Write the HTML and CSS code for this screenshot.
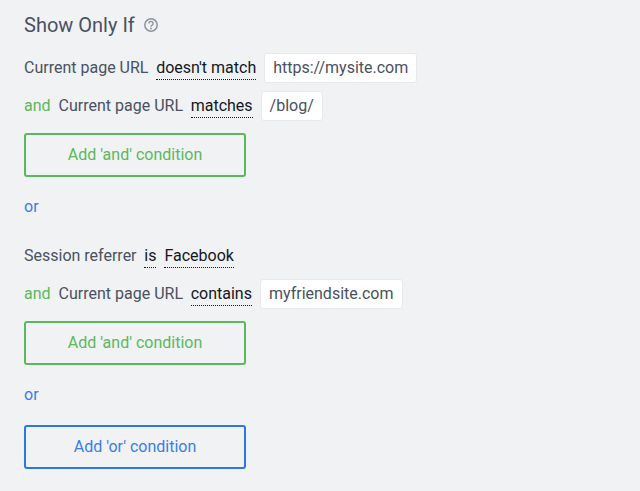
FILE: index.html
```html
<!DOCTYPE html>
<html lang="en">
<head>
    <meta charset="UTF-8">
    <title>Show Only If</title>
    <link rel="stylesheet" href="styles.css">
</head>
<body>
    <div class="title-row">
        <h2>Show Only If</h2>
        <svg class="help-icon" width="16" height="16" viewBox="0 0 16 16" fill="none">
            <circle cx="8" cy="8" r="6.2" stroke="#90949c" stroke-width="1.5"/>
            <path d="M5.9 6.5a2.1 2.1 0 1 1 3.3 1.7c-.8.5-1.2.9-1.2 1.6" stroke="#90949c" stroke-width="1.4"/>
            <rect x="7.2" y="10.7" width="1.6" height="1.6" fill="#90949c"/>
        </svg>
    </div>

    <div class="row">
        <span class="label">Current page URL</span>
        <span class="picker">doesn't match</span>
        <span class="value">https://mysite.com</span>
    </div>
    <div class="row">
        <span class="and">and</span>
        <span class="label">Current page URL</span>
        <span class="picker">matches</span>
        <span class="value">/blog/</span>
    </div>
    <button class="add-btn add-and">Add 'and' condition</button>

    <div class="or">or</div>

    <div class="row">
        <span class="label">Session referrer</span>
        <span class="picker">is</span>
        <span class="picker">Facebook</span>
    </div>
    <div class="row">
        <span class="and">and</span>
        <span class="label">Current page URL</span>
        <span class="picker">contains</span>
        <span class="value">myfriendsite.com</span>
    </div>
    <button class="add-btn add-and">Add 'and' condition</button>

    <div class="or or-last">or</div>

    <button class="add-btn add-or">Add 'or' condition</button>
</body>
</html>
```

FILE: styles.css
```css
body {
    margin: 0;
    padding: 13px 24px 0;
    background-color: #f0f2f4;
    font-family: Roboto, sans-serif;
    font-size: 16px;
    color: #4a5160;
}
.title-row {
    display: flex;
    align-items: center;
    gap: 8px;
    height: 24px;
    margin-bottom: 16px;
}
h2 {
    margin: 0;
    font-size: 20px;
    font-weight: 400;
    line-height: 24px;
}
.help-icon {
    display: block;
}
.row {
    display: flex;
    align-items: center;
    height: 30px;
    margin-bottom: 8px;
}
.and {
    color: #5cb85c;
    margin-right: 8px;
    margin-bottom: 2px;
}
.label {
    margin-right: 7.7px;
    margin-bottom: 2px;
}
.picker {
    color: #14171f;
    line-height: 22px;
    margin-top: 1px;
    margin-right: 8px;
    border-bottom: 1px dotted #14171f;
}
.value {
    display: block;
    height: 28px;
    line-height: 28px;
    padding: 0 8px;
    background-color: #fff;
    border: 1px solid #e6e8ec;
    border-radius: 3px;
}
.add-btn {
    display: block;
    width: 222px;
    height: 44px;
    padding: 0 0 2px;
    background: none;
    border: 2px solid;
    border-radius: 3px;
    font-family: inherit;
    font-size: 16px;
}
.add-and {
    margin-top: 12px;
    color: #5cb85c;
    border-color: #5cb85c;
}
.add-or {
    color: #3b7de6;
    border-color: #2b78e4;
}
.or {
    color: #3b7de6;
    line-height: 20px;
    margin-top: 20px;
    margin-bottom: 24px;
}
.or-last {
    margin-bottom: 20px;
}
```
